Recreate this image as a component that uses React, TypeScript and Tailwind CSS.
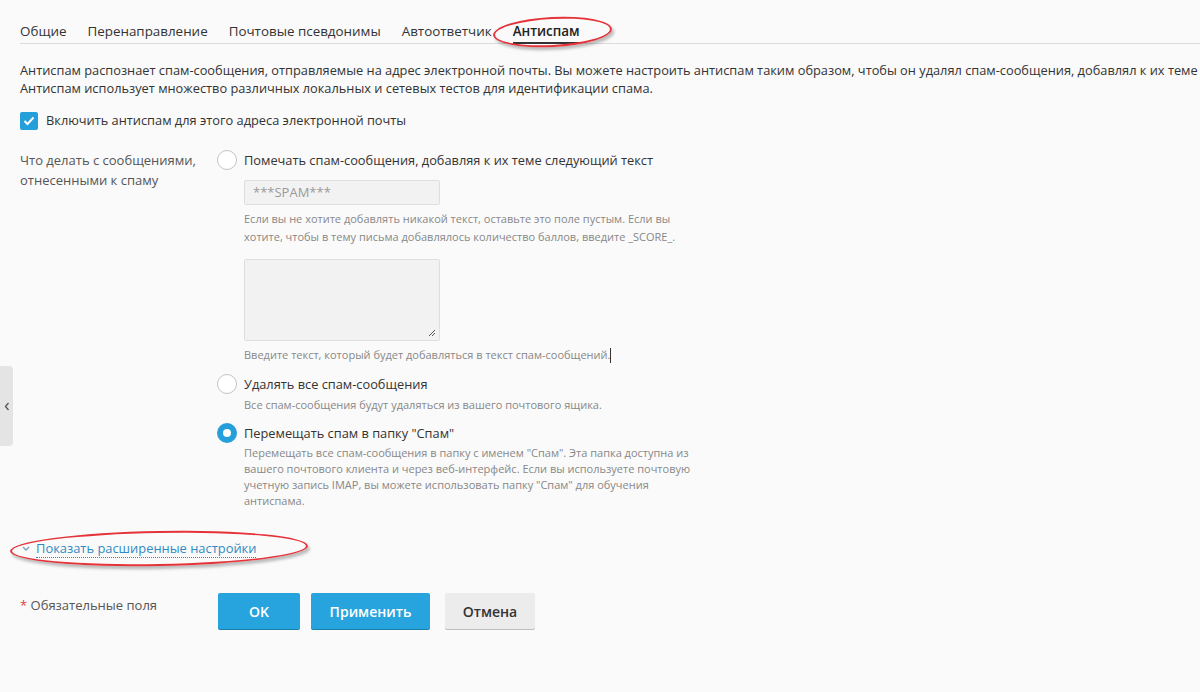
import React from 'react';

const tabs = ['Общие', 'Перенаправление', 'Почтовые псевдонимы', 'Автоответчик', 'Антиспам'];

function Radio({ checked }: { checked?: boolean }) {
  return checked ? (
    <span className="w-5 h-5 rounded-full border-[6px] border-[#259fd9] bg-white shrink-0" />
  ) : (
    <span className="w-5 h-5 rounded-full border border-[#c4c4c4] bg-white shrink-0" />
  );
}

export default function App() {
  return (
    <div className="relative min-h-[692px] overflow-hidden bg-[#fafafa] font-['Open_Sans',sans-serif] text-[#333]">
      {/* sidebar toggle */}
      <div className="absolute left-0 top-[366px] w-[13px] h-[80px] rounded-r bg-[#e4e4e4] flex items-center justify-center">
        <svg width="6" height="9" viewBox="0 0 6 9" fill="none">
          <path d="M4.5 1L1.5 4.5L4.5 8" stroke="#555" strokeWidth="1.3" />
        </svg>
      </div>

      <div className="pl-5 pt-[21px]">
        {/* Tabs */}
        <div className="flex gap-[21px] border-b border-[#dcdcdc] text-[13.4px]">
          {tabs.map((t) => (
            <div
              key={t}
              className={
                t === 'Антиспам'
                  ? 'leading-[20px] pb-[1px] border-b-2 border-[#333] -mb-px font-semibold text-[#222]'
                  : 'leading-[20px] pb-[2px] text-[#333]'
              }
            >
              {t}
            </div>
          ))}
        </div>

        {/* Description */}
        <p className="mt-[17px] text-[12.8px] leading-[18px] whitespace-nowrap">
          Антиспам распознает спам-сообщения, отправляемые на адрес электронной почты. Вы можете настроить антиспам таким образом, чтобы он удалял спам-сообщения, добавлял к их теме определенный текст
          <br />
          Антиспам использует множество различных локальных и сетевых тестов для идентификации спама.
        </p>

        <label className="mt-[14px] flex items-center gap-2 text-[12.8px]">
          <span className="w-[18px] h-[18px] rounded-[2px] bg-[#259fd9] flex items-center justify-center">
            <svg width="12" height="10" viewBox="0 0 12 10" fill="none">
              <path d="M1.5 5L4.5 8L10.5 1.5" stroke="white" strokeWidth="2" />
            </svg>
          </span>
          Включить антиспам для этого адреса электронной почты
        </label>

        {/* Form row */}
        <div className="mt-[20px] flex">
          <div className="w-[197px] text-[13px] leading-[20px] text-[#555]">
            Что делать с сообщениями,
            <br />
            отнесенными к спаму
          </div>
          <div className="flex flex-col">
            <div className="flex items-center gap-[7px] text-[12.8px] leading-[20px]">
              <Radio />
              Помечать спам-сообщения, добавляя к их теме следующий текст
            </div>
            <div className="pl-[27px]">
              <div className="mt-[10px] w-[196px] h-[25px] bg-[#f2f2f2] border border-[#dedede] rounded-[2px] px-[8px] text-[13px] leading-[23px] text-[#9a9a9a]">
                ***SPAM***
              </div>
              <p className="mt-[5px] text-[11px] leading-[18px] text-[#888]">
                Если вы не хотите добавлять никакой текст, оставьте это поле пустым. Если вы
                <br />
                хотите, чтобы в тему письма добавлялось количество баллов, введите _SCORE_.
              </p>
              <div className="relative mt-[13px] w-[196px] h-[82px] bg-[#f2f2f2] border border-[#dedede] rounded-[2px]">
                <svg className="absolute right-[3px] bottom-[3px]" width="8" height="8" viewBox="0 0 8 8" fill="none">
                  <path d="M7 1L1 7M7 4L4 7" stroke="#555" strokeWidth="1" />
                </svg>
              </div>
              <p className="mt-[5px] text-[11px] leading-[18px] text-[#888]">
                Введите текст, который будет добавляться в текст спам-сообщений.
                <span className="inline-block w-px h-[15px] bg-[#333] align-middle -mt-[2px]" />
              </p>
            </div>

            <div className="mt-[10px] flex items-center gap-[7px] text-[12.8px] leading-[20px]">
              <Radio />
              Удалять все спам-сообщения
            </div>
            <p className="pl-[27px] mt-[2px] text-[11px] leading-[18px] text-[#888]">
              Все спам-сообщения будут удаляться из вашего почтового ящика.
            </p>

            <div className="mt-[9px] flex items-center gap-[7px] text-[12.8px] leading-[20px]">
              <Radio checked />
              Перемещать спам в папку "Спам"
            </div>
            <p className="pl-[27px] mt-[2px] text-[11px] leading-[16px] text-[#888]">
              Перемещать все спам-сообщения в папку с именем "Спам". Эта папка доступна из
              <br />
              вашего почтового клиента и через веб-интерфейс. Если вы используете почтовую
              <br />
              учетную запись IMAP, вы можете использовать папку "Спам" для обучения
              <br />
              антиспама.
            </p>
          </div>
        </div>

        {/* Advanced link */}
        <div className="mt-[30px] flex items-center gap-[6px] text-[12.9px] leading-[20px]">
          <svg width="8" height="5" viewBox="0 0 8 5" fill="none" className="ml-[2px]">
            <path d="M1 1L4 4L7 1" stroke="#7c9fb8" strokeWidth="1.3" />
          </svg>
          <span className="text-[#2f8ac4] border-b border-dotted border-[#2f8ac4] leading-[18px]">
            Показать расширенные настройки
          </span>
        </div>

        {/* Footer */}
        <div className="mt-[35px] flex items-start">
          <div className="w-[198px] pt-[3px] text-[13px] leading-[18px] text-[#555]">
            <span className="text-[#e0413a]">*</span> Обязательные поля
          </div>
          <div className="flex gap-[11px]">
            <button className="w-[82px] h-[36px] bg-[#27a4dd] text-white text-[14px] font-semibold rounded-[2px] shadow-[0_1px_0_#1b7fae]">
              OK
            </button>
            <button className="w-[119px] h-[36px] bg-[#27a4dd] text-white text-[14px] font-semibold rounded-[2px] shadow-[0_1px_0_#1b7fae]">
              Применить
            </button>
            <button className="ml-[4px] w-[90px] h-[36px] bg-[#ececec] text-[#333] text-[14px] font-semibold rounded-[2px] shadow-[0_1px_0_#bdbdbd]">
              Отмена
            </button>
          </div>
        </div>
      </div>

      {/* annotation ellipses */}
      <div className="absolute left-[493px] top-[17px] w-[119px] h-[30px] rounded-[50%] border-2 border-[#e5333a] -rotate-[3deg] shadow-[2px_3px_3px_rgba(0,0,0,0.25)]" />
      <div className="absolute left-[10px] top-[531px] w-[298px] h-[35px] rounded-[50%] border-2 border-[#e5333a] -rotate-[1deg] shadow-[2px_3px_3px_rgba(0,0,0,0.25)]" />
    </div>
  );
}
